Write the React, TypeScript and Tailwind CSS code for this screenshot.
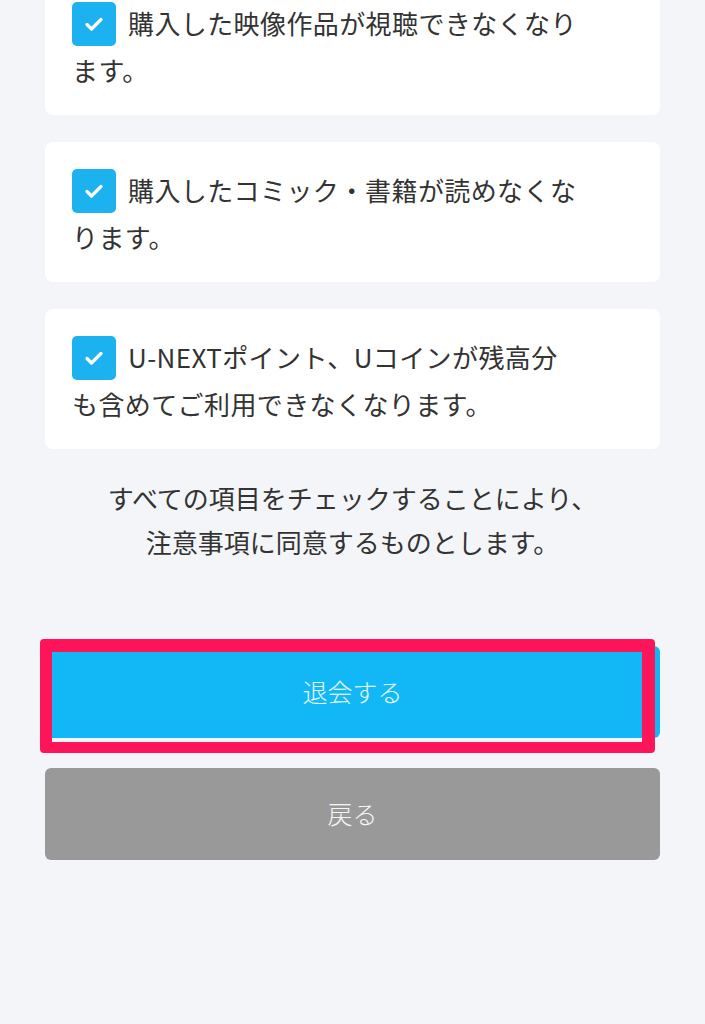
import React from "react";

const items = [
  ["購入した映像作品が視聴できなくなり", "ます。"],
  ["購入したコミック・書籍が読めなくな", "ります。"],
  ["U-NEXTポイント、Uコインが残高分", "も含めてご利用できなくなります。"],
];

function CheckBox() {
  return (
    <span className="inline-flex items-center justify-center w-[44px] h-[44px] mr-[12px] rounded-[5px] bg-[#1cb2ef] align-middle -mt-[5px]">
      <svg width="20" height="16" viewBox="0 0 20 16" fill="none">
        <path d="M3 8.5l4.5 4.5L17 3.5" stroke="white" strokeWidth="3.2" strokeLinecap="round" strokeLinejoin="round" />
      </svg>
    </span>
  );
}

export default function App() {
  return (
    <main
      className="min-h-screen bg-[#f4f5f9] overflow-hidden text-[#333333]"
      style={{ fontFamily: '"Noto Sans CJK JP", "Noto Sans", sans-serif' }}
    >
      <div className="-mt-[25px] px-[45px] pb-[160px]">
        {/* Checklist cards */}
        <div className="flex flex-col gap-[27px]">
          {items.map(([first, second]) => (
            <div key={first} className="h-[140px] bg-white rounded-[8px] px-[27px] pt-[24px] text-[26px] leading-[47px] tracking-[0.4px]">
              <CheckBox />
              {first}
              <br />
              {second}
            </div>
          ))}
        </div>

        <p className="mt-[27px] text-center text-[26px] leading-[44px]">
          すべての項目をチェックすることにより、
          <br />
          注意事項に同意するものとします。
        </p>

        {/* Withdraw button with highlight frame */}
        <div className="relative mt-[82px]">
          <button className="w-full h-[92px] rounded-[6px] bg-[#12b8f5] text-[25px] text-white/90 font-light">
            退会する
          </button>
          <div className="absolute -left-[5px] -top-[7px] right-[5px] -bottom-[15px] rounded-[4px] border-[#fe1559] border-t-[13px] border-l-[12px] border-r-[13px] border-b-[11px] pointer-events-none" />
        </div>

        <button className="mt-[30px] w-full h-[92px] rounded-[6px] bg-[#999999] text-[25px] text-white/90 font-light">
          戻る
        </button>
      </div>
    </main>
  );
}
